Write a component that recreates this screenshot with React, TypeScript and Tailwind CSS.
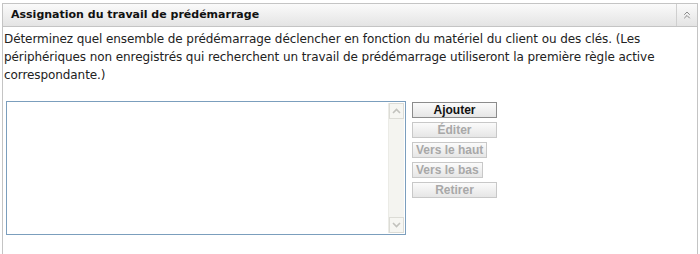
import { ChevronsUp } from "lucide-react";

const buttons: { label: string; full: boolean; enabled?: boolean }[] = [
  { label: "Ajouter", full: true, enabled: true },
  { label: "Éditer", full: true },
  { label: "Vers le haut", full: false },
  { label: "Vers le bas", full: false },
  { label: "Retirer", full: true },
];

export default function App() {
  return (
    <div className="w-[700px] h-[254px] bg-white pt-[3px] pl-[2px] pr-[2px] overflow-hidden font-['DejaVu_Sans',sans-serif]">
      <div className="h-[260px] border border-[#c4c4c4] border-b-0 flex flex-col">
        <div className="h-[23px] flex items-stretch border-b border-[#c4c4c4] bg-gradient-to-b from-[#fafafa] to-[#e4e4e4]">
          <div className="flex-1 pl-[8px] flex items-center text-[11px] font-bold text-[#111]">
            Assignation du travail de prédémarrage
          </div>
          <div className="w-[21px] border-l border-[#cfcfcf] flex items-center justify-center text-[#8a8a8a]">
            <ChevronsUp size={12} strokeWidth={2} />
          </div>
        </div>
        <p className="px-[1px] pt-[3px] text-[12px] leading-[18px] tracking-[-0.08px] text-[#222]">
          Déterminez quel ensemble de prédémarrage déclencher en fonction du matériel du client ou des clés. (Les
          périphériques non enregistrés qui recherchent un travail de prédémarrage utiliseront la première règle active
          correspondante.)
        </p>
        <div className="mt-[17px] ml-[3px] flex gap-[6px]">
          <div className="w-[400px] h-[134px] border border-[#7b9ebd] flex justify-end p-[1px]">
            <div className="w-[16px] flex flex-col justify-between bg-[#f4f4f0] border-l border-[#ebebe6]">
              <div className="h-[16px] border border-[#dcdcd6] bg-[#f6f6f2] flex items-center justify-center">
                <svg width="9" height="6" viewBox="0 0 9 6">
                  <path d="M1 5 L4.5 1.5 L8 5" fill="none" stroke="#c2c2bd" strokeWidth="1.6" />
                </svg>
              </div>
              <div className="h-[16px] border border-[#dcdcd6] bg-[#f6f6f2] flex items-center justify-center">
                <svg width="9" height="6" viewBox="0 0 9 6">
                  <path d="M1 1 L4.5 4.5 L8 1" fill="none" stroke="#c2c2bd" strokeWidth="1.6" />
                </svg>
              </div>
            </div>
          </div>
          <div className="flex flex-col items-start gap-[4px] pt-[1px]">
            {buttons.map((b) => (
              <button
                key={b.label}
                className={
                  (b.full ? "w-[85px] " : "px-[3px] ") +
                  "h-[16px] text-[12px] leading-[14px] font-bold font-['Liberation_Sans',sans-serif] bg-gradient-to-b from-[#fbfbfb] to-[#e6e6e6] border " +
                  (b.enabled ? "border-[#8c8c8c] text-[#111]" : "border-[#c8c8c8] text-[#a8a8a8]")
                }
              >
                {b.label}
              </button>
            ))}
          </div>
        </div>
      </div>
    </div>
  );
}
